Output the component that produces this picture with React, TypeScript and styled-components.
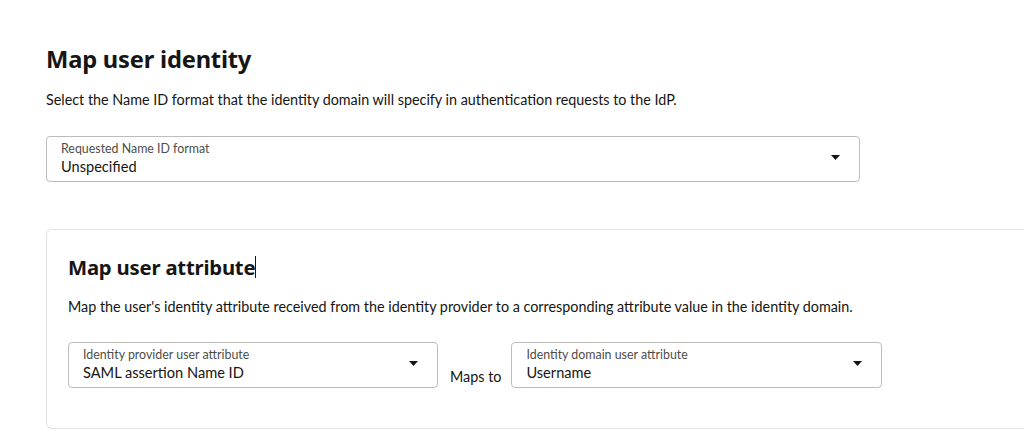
import React from 'react';
import styled, { createGlobalStyle } from 'styled-components';

const GlobalStyle = createGlobalStyle`
  html, body {
    margin: 0;
    padding: 0;
    background: #ffffff;
  }
  body {
    font-family: 'Lato', 'Noto Sans', 'Liberation Sans', sans-serif;
    color: #161513;
    overflow: hidden;
  }
`;

const Page = styled.div`
  padding: 43px 0 0 46px;
  width: 1024px;
  height: 441px;
  box-sizing: border-box;
`;

const Title = styled.h1`
  margin: 0;
  font-family: 'Noto Sans', 'Lato', sans-serif;
  font-size: 23.7px;
  font-weight: 700;
  line-height: 32px;
  letter-spacing: -0.2px;
`;

const Desc = styled.p`
  margin: 0;
  font-size: 14.35px;
  line-height: 20px;
  color: #161513;
`;

const IntroDesc = styled(Desc)`
  margin-top: 15px;
`;

const SelectBox = styled.div<{ $width: number }>`
  position: relative;
  width: ${(p) => p.$width}px;
  height: 46px;
  box-sizing: border-box;
  border: 1px solid #bdbcb9;
  border-radius: 4px;
  padding: 4px 40px 0 14px;
  background: #fff;
  display: flex;
  flex-direction: column;
`;

const SelectLabel = styled.span`
  font-size: 12.4px;
  line-height: 16px;
  color: #4f4d4a;
`;

const SelectValue = styled.span`
  font-size: 14.6px;
  line-height: 20px;
  color: #161513;
`;

const Caret = styled.svg`
  position: absolute;
  right: 19px;
  top: 18px;
`;

const FirstSelectWrap = styled.div`
  margin-top: 26px;
`;

const Card = styled.section`
  margin-top: 47px;
  border: 1px solid #e3e3e3;
  border-right: none;
  border-radius: 6px 0 0 6px;
  height: 200px;
  box-sizing: border-box;
  padding: 22px 0 0 21px;
`;

const CardTitle = styled.h2`
  margin: 0;
  font-family: 'Noto Sans', 'Lato', sans-serif;
  font-size: 20.3px;
  font-weight: 700;
  line-height: 30px;
  letter-spacing: -0.2px;
  display: flex;
  align-items: center;
`;

const Cursor = styled.span`
  display: inline-block;
  width: 1px;
  height: 22px;
  background: #161513;
`;

const CardDesc = styled(Desc)`
  margin-top: 15px;
`;

const MapRow = styled.div`
  margin-top: 25px;
  display: flex;
  align-items: flex-end;
  gap: 12px;
`;

const MapsTo = styled.span`
  font-size: 14.35px;
  line-height: 20px;
  padding-bottom: 1px;
  margin-right: -2px;
`;

function Select({ label, value, width }: { label: string; value: string; width: number }) {
  return (
    <SelectBox $width={width}>
      <SelectLabel>{label}</SelectLabel>
      <SelectValue>{value}</SelectValue>
      <Caret width="9" height="5" viewBox="0 0 9 5">
        <path d="M0 0 H9 L4.5 5 Z" fill="#161513" />
      </Caret>
    </SelectBox>
  );
}

export default function App() {
  return (
    <>
      <GlobalStyle />
      <Page>
        <Title>Map user identity</Title>
        <IntroDesc>
          Select the Name ID format that the identity domain will specify in authentication requests to the IdP.
        </IntroDesc>
        <FirstSelectWrap>
          <Select label="Requested Name ID format" value="Unspecified" width={814} />
        </FirstSelectWrap>
        <Card>
          <CardTitle>
            Map user attribute
            <Cursor />
          </CardTitle>
          <CardDesc>
            Map the user's identity attribute received from the identity provider to a corresponding attribute value in the identity domain.
          </CardDesc>
          <MapRow>
            <Select label="Identity provider user attribute" value="SAML assertion Name ID" width={370} />
            <MapsTo>Maps to</MapsTo>
            <Select label="Identity domain user attribute" value="Username" width={371} />
          </MapRow>
        </Card>
      </Page>
    </>
  );
}
